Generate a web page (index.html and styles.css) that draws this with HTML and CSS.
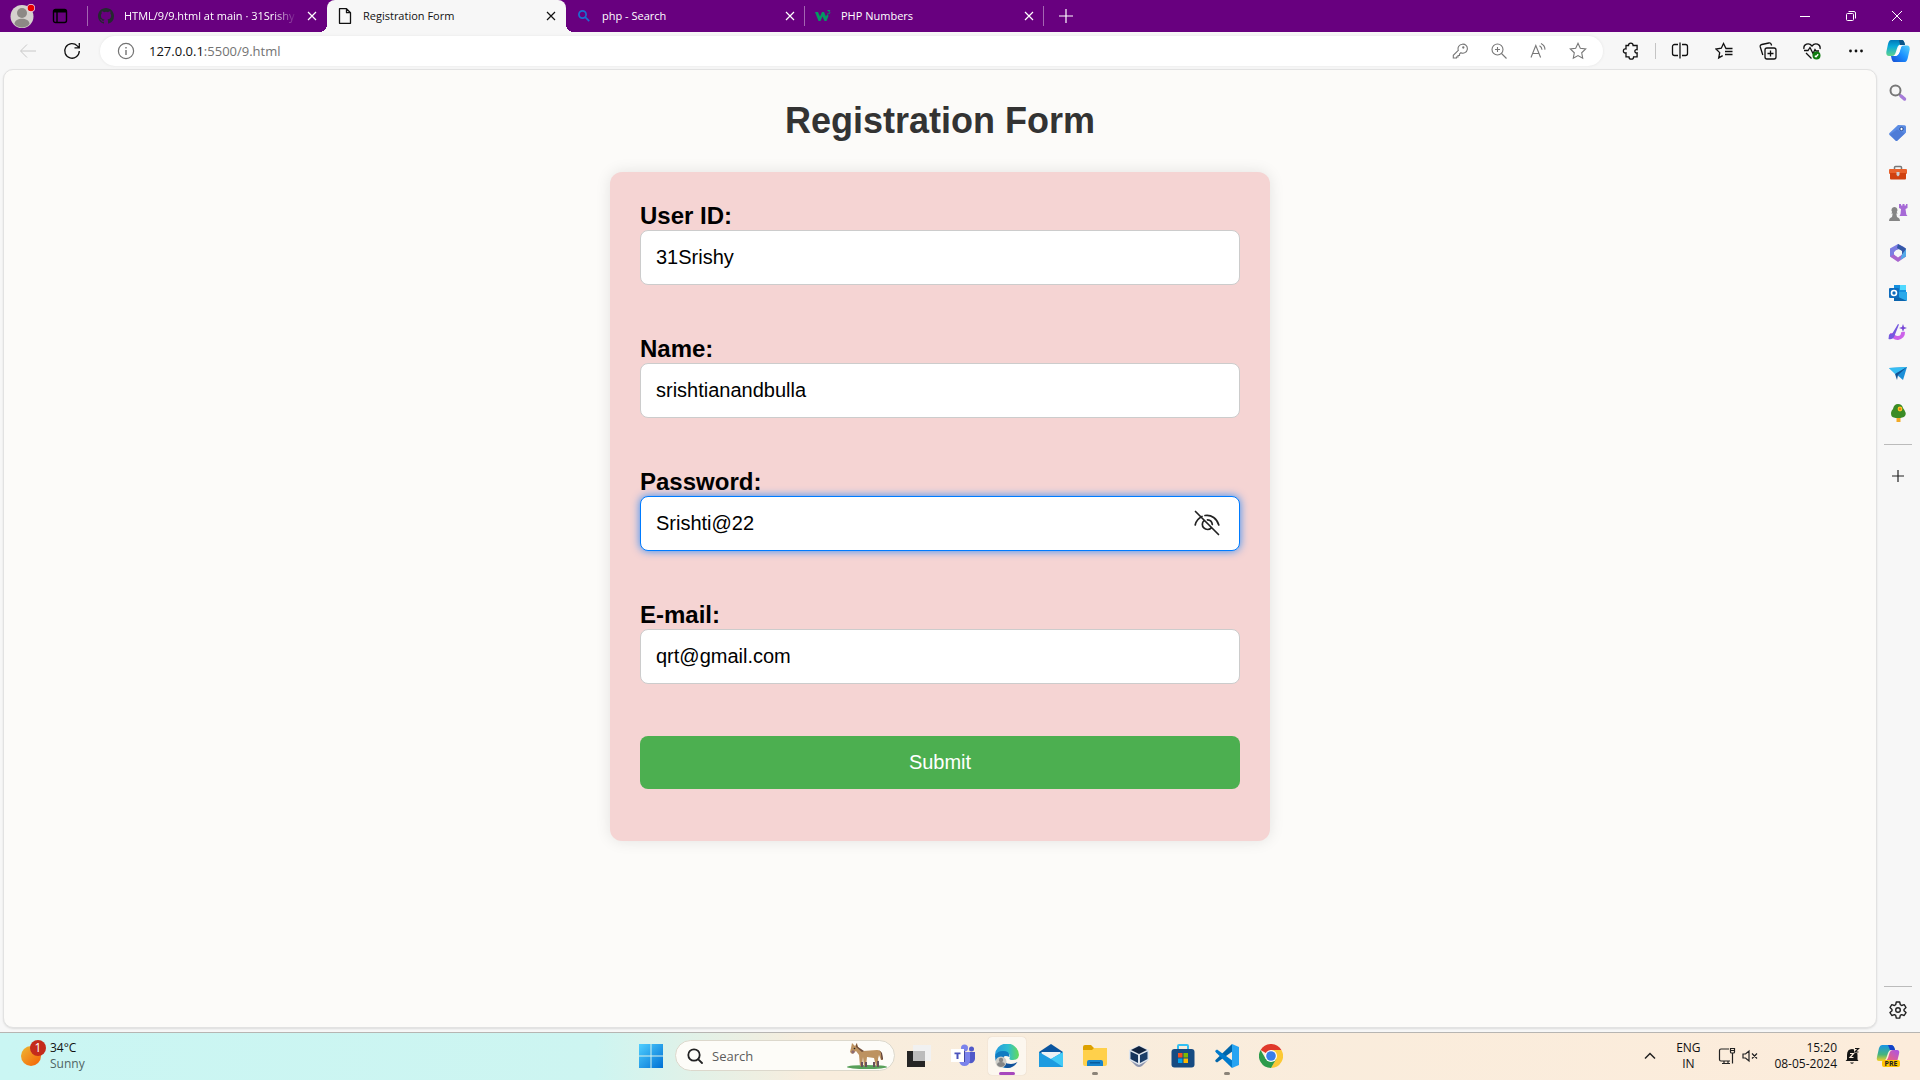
FILE: index.html
```html
<!DOCTYPE html>
<html lang="en">
<head>
<meta charset="utf-8">
<title>Registration Form</title>
<link rel="stylesheet" href="styles.css">
</head>
<body>
<header class="tabbar">
  <button class="profile" aria-label="Profile"><svg width="26" height="24" viewBox="0 0 26 24"><circle cx="12" cy="12.500" r="11.500" fill="#d5d1cd"/><circle cx="12" cy="9" r="5" fill="#8d8985"/><path d="M4.500 20c0-7 15-7 15 0-3 4.500-12 4.500-15 0z" fill="#8d8985"/><circle cx="21" cy="4" r="4" fill="#f2d8ea"/><circle cx="21" cy="4" r="3.300" fill="#e80000"/></svg></button>
  <button class="tab-actions" aria-label="Tab actions"><svg width="16" height="16" viewBox="0 0 16 16" fill="none" stroke="#000" stroke-width="1.400"><rect x="1.500" y="1.500" width="13" height="13" rx="2"/><path d="M2 3h12" stroke-width="3"/><path d="M5 4v10"/></svg></button>
  <nav class="tabs" aria-label="Tabs">
    <div class="tab divided-left">
      <svg width="16" height="16" viewBox="0 0 16 16"><path fill="#24292f" d="M8 0C3.580 0 0 3.580 0 8c0 3.540 2.290 6.530 5.470 7.590.4.070.55-.17.55-.38 0-.19-.01-.82-.01-1.490-2.010.37-2.530-.49-2.690-.94-.09-.23-.48-.94-.82-1.130-.28-.15-.68-.52-.01-.53.63-.01 1.080.58 1.230.82.72 1.210 1.870.87 2.330.66.070-.52.28-.87.51-1.070-1.780-.2-3.640-.89-3.640-3.950 0-.87.31-1.590.82-2.150-.08-.2-.36-1.020.08-2.120 0 0 .67-.21 2.200.82a7.600 7.600 0 0 1 4 0c1.530-1.040 2.200-.82 2.200-.82.44 1.100.16 1.920.08 2.120.51.56.82 1.270.82 2.150 0 3.070-1.870 3.750-3.650 3.950.29.25.54.73.54 1.480 0 1.070-.01 1.930-.01 2.200 0 .21.15.46.55.38A8 8 0 0 0 16 8c0-4.420-3.580-8-8-8z"/></svg>
      <span class="tab-title faded">HTML/9/9.html at main · 31Srishy</span>
      <button class="tab-close" aria-label="Close tab"><svg width="10" height="10" viewBox="0 0 10 10"><path d="M1 1l8 8M9 1L1 9"/></svg></button>
    </div>
    <div class="tab active">
      <svg width="16" height="16" viewBox="0 0 16 16" fill="none" stroke="#111" stroke-width="1.300" stroke-linejoin="round"><path d="M2.500 .7h7l4 4v10.600h-11zM9.500 .7v4h4"/></svg>
      <span class="tab-title">Registration Form</span>
      <button class="tab-close" aria-label="Close tab"><svg width="10" height="10" viewBox="0 0 10 10"><path d="M1 1l8 8M9 1L1 9"/></svg></button>
    </div>
    <div class="tab divided">
      <svg width="16" height="16" viewBox="0 0 16 16" fill="none" stroke="#1a6fd0" stroke-width="1.700"><circle cx="6.500" cy="6.500" r="3.600"/><path d="M9.200 9.200l4 4"/></svg>
      <span class="tab-title">php - Search</span>
      <button class="tab-close" aria-label="Close tab"><svg width="10" height="10" viewBox="0 0 10 10"><path d="M1 1l8 8M9 1L1 9"/></svg></button>
    </div>
    <div class="tab divided">
      <svg width="16" height="16" viewBox="0 0 16 16"><path d="M0 4h3l2 4.500L7 4h2l2 4.500L12.500 6l1 2-2 5h-2L7.500 8.500 5.500 13h-2z" fill="#059862"/><path d="M12.500 2.500h2.300l-1 1.400c1.800 0 1.500 2.400-1.300 1.700" fill="none" stroke="#059862"/></svg>
      <span class="tab-title">PHP Numbers</span>
      <button class="tab-close" aria-label="Close tab"><svg width="10" height="10" viewBox="0 0 10 10"><path d="M1 1l8 8M9 1L1 9"/></svg></button>
    </div>
  </nav>
  <button class="new-tab" aria-label="New tab"><svg width="14" height="14" viewBox="0 0 14 14" stroke="#fff" stroke-width="1.200"><path d="M7 0v14M0 7h14"/></svg></button>
  <div class="window-controls">
    <button aria-label="Minimize"><svg width="12" height="12" viewBox="0 0 12 12"><path d="M1 6.500h10"/></svg></button>
    <button aria-label="Restore"><svg width="12" height="12" viewBox="0 0 12 12"><rect x="1.500" y="3.500" width="7" height="7" rx="1"/><path d="M3.500 1.500H9A1.500 1.500 0 0 1 10.500 3v5.500"/></svg></button>
    <button aria-label="Close"><svg width="12" height="12" viewBox="0 0 12 12"><path d="M1 1l10 10M11 1L1 11"/></svg></button>
  </div>
</header>

<div class="toolbar">
  <button aria-label="Back"><svg width="18" height="18" viewBox="0 0 18 18" stroke="#c8c8c8"><path d="M17 9H2M8 2.500L1.500 9 8 15.500"/></svg></button>
  <button aria-label="Refresh"><svg width="18" height="18" viewBox="0 0 18 18" stroke="#111" stroke-width="1.300"><path d="M16.300 9a7.300 7.300 0 1 1-2-5.100L16 5.600M16.300 1v4.800h-4.800"/></svg></button>
  <div class="address">
    <svg width="18" height="18" viewBox="0 0 18 18" stroke="#737373" stroke-width="1.200"><circle cx="9" cy="9" r="7.600"/><path d="M9 8v5M9 5v1.400" stroke-width="1.400"/></svg>
    <a class="url" href="#"><span class="host">127.0.0.1</span>:5500/9.html</a>
    <div class="address-tools">
      <button aria-label="Passwords"><svg width="16" height="16" viewBox="0 0 16 16"><path d="M10.200 1.200a4.500 4.500 0 1 1-1.300 8.500L7.500 11v1.500H6V14H4.500v1H1.300v-2.700l5-5a4.600 4.600 0 0 1 3.900-6.100z"/><circle cx="11.300" cy="4.500" r=".6"/></svg></button>
      <button aria-label="Zoom"><svg width="16" height="16" viewBox="0 0 16 16"><circle cx="6.500" cy="6.500" r="5.500"/><path d="M10.500 10.500l5 5M6.500 4v5M4 6.500h5"/></svg></button>
      <button aria-label="Read aloud"><svg width="16" height="16" viewBox="0 0 16 16"><path d="M1 14.500L5.800 2.500l4.800 12M2.700 10.500h6.300M9.500 2.800a5 5 0 0 1 2.500 4M11 .6a7 7 0 0 1 4 6"/></svg></button>
      <button aria-label="Favorite this page"><svg width="18" height="18" viewBox="0 0 18 18"><path d="M9 1.300l2.300 5 5.400.7-4 3.800 1 5.400L9 13.600l-4.700 2.600 1-5.400-4-3.800 5.400-.7z"/></svg></button>
    </div>
  </div>
  <div class="extensions">
    <button aria-label="Extensions"><svg width="18" height="18" viewBox="0 0 18 18"><path d="M6.500 3.500a2.300 2.300 0 0 1 4.600 0h4v4.200c-3-1-3 4 0 3.200v4h-3.500a2.300 2.300 0 0 1-4.600 0H4v-4c-3.500 1-3.500-5 0-4V3.500z"/></svg></button>
    <span class="rule"></span>
    <button aria-label="Split screen"><svg width="18" height="18" viewBox="0 0 18 18"><path d="M7 2.500H3.500a2 2 0 0 0-2 2v7a2 2 0 0 0 2 2H7M11 2.500h3.500a2 2 0 0 1 2 2v7a2 2 0 0 1-2 2H11M9 .5v16"/></svg></button>
    <button aria-label="Favorites"><svg width="18" height="18" viewBox="0 0 18 18"><path d="M12 6.500h-1L8.500 1.500 6.300 6.200 1 7l3.700 3.600-1 5.300 4-2.300M10 9.500h7.500M10 12.500h7.500M12 6.500h5.500"/></svg></button>
    <button aria-label="Collections"><svg width="18" height="18" viewBox="0 0 18 18"><rect x="6" y="6" width="11" height="11" rx="2"/><path d="M11.500 8.500v6M8.500 11.500h6M3.800 13l-2.500-8q-.5-2 1.500-2.500l7-1.500q2-.3 2.500 1.500l.3 1"/></svg></button>
    <button aria-label="Browser essentials"><svg width="18" height="18" viewBox="0 0 18 18"><path d="M1 7C0 2 6 0 9 4c3-4 9-2 8 3M1 8.500h4l2-3 3 6 2-4 1 1.500h3M3 11l5.500 5.500"/><circle cx="13.500" cy="13.500" r="4" fill="#107c10" stroke="none"/><path d="M11.800 13.800l1.200 1 2.200-2.500" stroke="#fff"/></svg></button>
    <button aria-label="Settings and more"><svg width="18" height="18" viewBox="0 0 18 18"><g fill="#111" stroke="none"><circle cx="3.500" cy="9" r="1.400"/><circle cx="9" cy="9" r="1.400"/><circle cx="14.500" cy="9" r="1.400"/></g></svg></button>
  </div>
  <button class="copilot" aria-label="Copilot"><svg width="24" height="24" viewBox="0 0 24 24" stroke="none"><defs><linearGradient id="cpa" x1="0" y1="0" x2="0" y2="1"><stop offset="0" stop-color="#0078b8"/><stop offset=".4" stop-color="#09a9d9"/><stop offset="1" stop-color="#5fd48d"/></linearGradient><linearGradient id="cpb" x1="0" y1="1" x2="1" y2="0"><stop offset="0" stop-color="#174bd2"/><stop offset=".5" stop-color="#1a8fff"/><stop offset="1" stop-color="#58d3fb"/></linearGradient></defs><path d="M5 1h11q2 0 3 5l-4-.5q-3 0-4 4L9.500 14Q8.500 17 6 17H3Q0 17 .3 13L2 5Q3 1 5 1z" fill="url(#cpa)"/><path d="M13 1h3q2 0 3 5h-5z" fill="#0b5588"/><path d="M19 23H8q-2 0-3-6h4q3 0 4-4l1.500-4.500Q15.500 6.500 18 6.500h3q3 0 2.700 4L22 18q-1 5-3 5z" fill="url(#cpb)"/><path d="M15 7q-2 0-3 3l-1 4q-.5 2-2.500 2.500 3.500.5 4.500-3z" fill="#fff" stroke="#fff"/></svg></button>
</div>

<div class="workspace">
  <main class="page">
    <h1>Registration Form</h1>
    <form class="card">
      <div class="fields">
        <div class="field"><label for="userid">User ID:</label><input id="userid" type="text" value="31Srishy"></div>
        <div class="field"><label for="name">Name:</label><input id="name" type="text" value="srishtianandbulla"></div>
        <div class="field"><label for="password">Password:</label>
          <div class="reveal-wrap"><input id="password" class="focused" type="text" value="Srishti@22"><button class="reveal" type="button" aria-label="Hide password"><svg width="26" height="26" viewBox="0 0 26 26" fill="none" stroke="#222" stroke-width="1.700" stroke-linecap="round"><path d="M1.500 1.500l23 23M8 6.500C4.500 8.200 2 11 1.200 15M11 5.500c6.500-1 12 3 13.800 9.500M10 10.500a5.200 5.200 0 1 0 7.300 7.400M13.500 9.800a5.200 5.200 0 0 1 4.800 4.700"/></svg></button></div>
        </div>
        <div class="field"><label for="email">E-mail:</label><input id="email" type="email" value="qrt@gmail.com"></div>
      </div>
      <button class="submit" type="button">Submit</button>
    </form>
  </main>
  <aside class="sidebar">
    <div class="side-group">
      <button aria-label="Search"><svg width="20" height="20" viewBox="0 0 20 20"><circle cx="7.500" cy="7.500" r="5" fill="#f6f6f6" stroke="#777" stroke-width="2"/><path d="M11 11l3 3" stroke="#777" stroke-width="2"/><path d="M13 13l3.500 3" stroke="#a67bd9" stroke-width="3.500" stroke-linecap="round"/></svg></button>
      <button aria-label="Shopping"><svg width="20" height="20" viewBox="0 0 20 20"><path d="M10 2l6.500 .3q1.500 0 1.500 1.500L18 9.500l-8.500 8q-1 1-2 0L1.500 12q-1-1 0-2z" fill="#5b8ce4"/><path d="M2 11.500l7-5 8 4-7.500 7q-1 1-2 0z" fill="#4672cf" opacity=".6"/><circle cx="13.500" cy="6" r="1.700" fill="#fff" stroke="#214896"/></svg></button>
      <button aria-label="Tools"><svg width="20" height="20" viewBox="0 0 20 20"><path d="M6.500 7V4.500q0-1 1-1h5q1 0 1 1V7" fill="none" stroke="#777" stroke-width="1.500"/><rect x="1" y="6" width="18" height="5" rx="1" fill="#e8622c"/><path d="M2 10h16v5.500q0 1-1 1H3q-1 0-1-1z" fill="#d04210"/><path d="M8.500 9h3v3L10 13.500 8.500 12z" fill="#ccd2d5"/></svg></button>
      <button aria-label="Games"><svg width="20" height="20" viewBox="0 0 20 20"><path d="M11 1h2v1.500h1.500V1h2v1.500H18V1h1.500v4l-2 1 .8 5.500 1.200 1.500h-8l1-2L13 6l-2-1z" fill="#a669d6"/><path d="M6.500 4a3 3 0 0 1 2.200 5l1 1.500H8.300l.7 3.500q3 1 3 4H1q0-3 3-4l.7-3.500H3.200l1-1.500A3 3 0 0 1 6.500 4z" fill="#858585"/></svg></button>
      <button aria-label="Microsoft 365"><svg width="20" height="20" viewBox="0 0 20 20"><path d="M10 1L2 5.500v8l4 2V9l4-2.500 7-2z" fill="#7c7de2"/><path d="M10 1l8 4.500v8.200l-4-2.500V8l-5-3z" fill="#3457a6"/><path d="M2 13.500l8 5.500 8-5.500v-5l-4 3-4 3-4-3z" fill="#a865ce"/><path d="M18 6v7.500L12 17l2-5.500z" fill="#53a9e8"/><circle cx="10" cy="10" r="3.200" fill="#f7f7f7"/></svg></button>
      <button aria-label="Outlook"><svg width="20" height="20" viewBox="0 0 20 20"><path d="M6 2h12v14H6z" fill="#1490df"/><path d="M12 2h6v5h-6z" fill="#50d9ff"/><path d="M6 9l13 0v8q0 1-1 1H6z" fill="#28a8ea"/><path d="M6 12l13 6H6z" fill="#0a64ad"/><rect x="1" y="5" width="10" height="10" rx="1" fill="#0f6cbd"/><circle cx="6" cy="10" r="2.500" fill="none" stroke="#fff" stroke-width="1.600"/></svg></button>
      <button aria-label="Designer"><svg width="20" height="20" viewBox="0 0 20 20"><path d="M4 10a5.500 5.500 0 1 0 11-1" fill="none" stroke="#cc62e9" stroke-width="4"/><path d="M10 1l1 .5L6 14q-2 3-5.500 2l.5-4q1-2 3-1z" fill="#7559df"/><path d="M15 1l1 3 3 1-3 1-1 3-1-3-3-1 3-1z" fill="#7747d6"/></svg></button>
      <button aria-label="Drop"><svg width="20" height="20" viewBox="0 0 20 20"><path d="M1 5l18-1-4 13-7-6z" fill="#1d8fd8"/><path d="M1 5l18-1L7 11z" fill="#36bdf3"/><path d="M7 11l12-7-9 8-1 5z" fill="#125395"/></svg></button>
      <button aria-label="E-tree"><svg width="20" height="20" viewBox="0 0 20 20"><path d="M8.500 13h4v6h-4z" fill="#f2aa28"/><path d="M10 1q4 0 5 4 4 5 2 8-2 2-7 2T3.500 13Q2 9 5 6q1-5 5-5z" fill="#3a8c26"/><circle cx="12" cy="6" r="2.400" fill="#ffc321"/><circle cx="12" cy="6" r="1" fill="#e36717"/></svg></button>
    </div>
    <hr>
    <button class="side-add" aria-label="Customize"><svg width="14" height="14" viewBox="0 0 14 14" stroke="#222" stroke-width="1.200"><path d="M7 1v12M1 7h12"/></svg></button>
    <hr class="push">
    <button class="side-settings" aria-label="Settings"><svg width="18" height="18" viewBox="0 0 18 18" fill="none" stroke="#222" stroke-width="1.400" stroke-linejoin="round"><path d="M7.300 1h3.400l.6 2.700 1.300.8 2.600-.9L17 6.500l-2 1.900v1.300l2 1.900-1.800 2.900-2.600-.9-1.300.8-.6 2.700H7.300l-.6-2.700-1.300-.8-2.600.9L1 11.600l2-1.900V8.400L1 6.500l1.800-2.900 2.600.9 1.300-.8z"/><circle cx="9" cy="9" r="2.300"/></svg></button>
  </aside>
</div>

<footer class="taskbar">
  <button class="weather">
    <svg width="28" height="32" viewBox="0 0 28 32"><defs><linearGradient id="sun" x1="0" y1="0" x2="1" y2="1"><stop offset="0" stop-color="#edb934"/><stop offset="1" stop-color="#f65f04"/></linearGradient></defs><circle cx="11" cy="16" r="10" fill="url(#sun)"/><circle cx="18" cy="8" r="8" fill="#c42b1c"/><text x="18" y="12" class="badge-text">1</text></svg>
    <span class="weather-text"><span>34°C</span><span class="muted">Sunny</span></span>
  </button>
  <div class="apps">
    <button class="app" aria-label="Start"><svg width="24" height="24" viewBox="0 0 24 24"><defs><linearGradient id="win" x1="0" y1="0" x2="1" y2="1" gradientUnits="objectBoundingBox"><stop offset="0" stop-color="#4fcfff"/><stop offset="1" stop-color="#0070d4"/></linearGradient></defs><path d="M0 0h11.500v11.500H0zM12.500 0H24v11.500H12.500zM0 12.500h11.500V24H0zM12.500 12.500H24V24H12.500z" fill="url(#win)"/></svg></button>
    <div class="search"><label for="tasksearch" aria-label="Search"><svg width="16" height="16" viewBox="0 0 16 16" fill="none" stroke="#222" stroke-width="1.800" stroke-linecap="round"><circle cx="7" cy="7" r="5.700"/><path d="M11.300 11.300l3.700 3.700"/></svg></label><input id="tasksearch" type="text" placeholder="Search"><svg width="40" height="28" viewBox="0 0 40 28"><ellipse cx="20" cy="25" rx="20" ry="2" fill="#58a05a"/><path d="M5 1l3 3 2-3 1 4 5 4 14-1q4 0 5 4l1 6h-2l-2-5-1 4 1 7h-3l-2-8-7-1-1 9h-2l-1-9-1 9h-2l-1-11-3-4-4 3-2-2 1-4z" fill="#bd9260"/><path d="M9 1l2 4 6 4-2 1-6-5z" fill="#74513c"/><path d="M14 20h2v5h-2zM18 20h2v5h-2zM26 20h2v5h-2zM30 19h2v6h-2z" fill="#67505b"/><path d="M32 8l2 3 .5 7 1.500-1-1-6z" fill="#5d4038"/><path d="M4 10l2-2 2 2-2 2z" fill="#8b6a72"/><circle cx="7.500" cy="6.500" r=".8" fill="#222"/></svg></div>
    <button class="app" aria-label="Task view"><svg width="24" height="24" viewBox="0 0 24 24"><path d="M0 7h18v16H0z" fill="#252525"/><path d="M6 1h18v16H6z" fill="#f1f1f1"/><path d="M6 7h12v10H6z" fill="#bcbcbc"/></svg></button>
    <button class="app" aria-label="Teams"><svg width="24" height="24" viewBox="0 0 24 24"><circle cx="13.500" cy="4" r="3.500" fill="#7b83eb"/><circle cx="20.500" cy="5" r="2.500" fill="#5059c9"/><path d="M15 8h9v7q-1 5-6 4z" fill="#5059c9"/><path d="M8 8h11v9q-1 5-5.500 5T8 17z" fill="#7b83eb"/><path d="M2 7h12v11H2z" fill="#4348a0"/><path d="M0 5h13v13H0z" fill="#fff"/><path d="M3.500 8.500h6v1.800H7.500V15h-2v-4.700h-2z" fill="#4b53bc"/></svg></button>
    <button class="app current" aria-label="Edge"><svg width="24" height="24" viewBox="0 0 24 24"><defs><linearGradient id="edg"><stop offset="0" stop-color="#279bdf"/><stop offset=".55" stop-color="#2fbed0"/><stop offset="1" stop-color="#66db57"/></linearGradient></defs><path d="M0 12A12 12 0 0 1 24 11q-.5 5-6 5-4 0-3.500-2c2-3-1-5-5-5Q3 9 0 12z" fill="url(#edg)"/><path d="M0 12Q2 7 8 7q7 0 6.500 6Q7 10 8 17q2 6 9 5.500Q12 25 7 23 0 20 0 12z" fill="#117bc1"/><path d="M9 12q-2 8 7 8 3 0 6.500-2-4 6-10 6-7-1-7-7z" fill="#12539b"/><circle cx="6" cy="18" r="5.500" fill="#cdcdc8"/><circle cx="6" cy="16" r="2.200" fill="#858585"/><path d="M2 21q0-3 4-3t4 3q-4 4-8 0z" fill="#858585"/></svg></button>
    <button class="app" aria-label="Mail"><svg width="24" height="24" viewBox="0 0 24 24"><path d="M0 8l12-8 12 8v5H0z" fill="#0b559f"/><path d="M2.500 8h19v9h-19z" fill="#edf2f5"/><path d="M0 8l12 7 12-7v15H0z" fill="#1d9be0"/><path d="M24 8v15L12 15z" fill="#42caf6"/></svg></button>
    <button class="app running" aria-label="File Explorer"><svg width="24" height="24" viewBox="0 0 24 24"><path d="M0 3q0-2 2-2h6l3 3h12q1 0 1 1v6H0z" fill="#dda100"/><path d="M0 6h9l2-2h13v16q0 2-2 2H2q-2 0-2-2z" fill="#ffd04b"/><path d="M4 22v-4q0-2 2-2h12q2 0 2 2v4z" fill="#1583cd"/><path d="M7 18h10v1.500H7z" fill="#075b9d"/></svg></button>
    <button class="app" aria-label="VirtualBox"><svg width="24" height="24" viewBox="0 0 24 24"><path d="M3 10v6l6 6q3 2 6 0l6-6v-6z" fill="#8d95ae"/><path d="M12 1l10 5v10l-10 5-10-5V6z" fill="#dfe6ee"/><path d="M12 2l8 4-8 4-8-4z" fill="#10233f"/><path d="M3.500 7.500L11 11v8l-7.500-4z" fill="#16355d"/><path d="M20.500 7.500L13 11v8l7.500-4z" fill="#1c3f69"/></svg></button>
    <button class="app" aria-label="Microsoft Store"><svg width="24" height="24" viewBox="0 0 24 24"><path d="M7 6V2q0-1 1-1h8q1 0 1 1v4" fill="none" stroke="#33c0f3" stroke-width="2"/><rect x=".5" y="5" width="23" height="18.500" rx="3" fill="#164b82"/><path d="M7 9h4.500v4.500H7z" fill="#f25022"/><path d="M12.500 9H17v4.500h-4.500z" fill="#7fba00"/><path d="M7 14.500h4.500V19H7z" fill="#00a4ef"/><path d="M12.500 14.500H17V19h-4.500z" fill="#ffb900"/></svg></button>
    <button class="app running" aria-label="Visual Studio Code"><svg width="24" height="24" viewBox="0 0 24 24"><path d="M17 0L1 15.500 0 17l2 1.500L18 7z" fill="#0065a9"/><path d="M17 24L1 8.500 0 7l2-1.500L18 17z" fill="#007acc"/><path d="M17 0l7 3v18l-7 3z" fill="#27a4f2"/></svg></button>
    <button class="app" aria-label="Chrome"><svg width="24" height="24" viewBox="0 0 24 24"><path d="M12 12L1.600 6A12 12 0 0 1 22.400 6z" fill="#e0392b"/><path d="M12 12V6h10.400A12 12 0 0 1 12 24l5-9z" fill="#fcc934"/><path d="M1.600 6A12 12 0 0 0 12 24l5.200-9H12L6.800 15z" fill="#2d9b4b"/><circle cx="12" cy="12" r="6" fill="#fff"/><circle cx="12" cy="12" r="4.800" fill="#397eea"/></svg></button>
  </div>
  <div class="tray">
    <button aria-label="Show hidden icons"><svg width="12" height="12" viewBox="0 0 12 12" fill="none" stroke="#222" stroke-width="1.500"><path d="M1 8.500l5-5 5 5"/></svg></button>
    <button class="lang"><span>ENG</span><span>IN</span></button>
    <button class="status" aria-label="Network and volume">
      <svg width="18" height="18" viewBox="0 0 18 18" fill="none" stroke="#222" stroke-width="1.200"><path d="M11 2H3Q1.500 2 1.500 3.500v9Q1.500 14 3 14h9M4 16.500h8M6 14v2.500M10 14v2.500M12.500 1.500h4V5q0 1-1 1h-2q-1 0-1-1zM14.500 6v10.500M12.500 3.500h4"/></svg>
      <svg width="16" height="16" viewBox="0 0 16 16" fill="none" stroke="#222" stroke-width="1.200"><path d="M1 6v4h2.500L7 13V3L3.500 6zM10 5.500l5 5M15 5.500l-5 5"/></svg>
    </button>
    <button class="clock"><span>15:20</span><span>08-05-2024</span></button>
    <button aria-label="Notifications"><svg width="16" height="18" viewBox="0 0 16 18"><path d="M3 12.500V8q0-6 5-6 5.500 0 5.500 6v4.500l1 1.500H1.500zM6 15.500h4q-2 2.500-4 0z" fill="#151515"/><path d="M10 0h6v6h-6z" fill="#fcecdb"/><path d="M6 6.500h3.500L6 10.500h3.500" fill="none" stroke="#fcecdb" stroke-width="1.200"/><path d="M11 1.500h3.500l-3.500 3.500h3.500" fill="none" stroke="#151515" stroke-width="1.200"/></svg></button>
    <button aria-label="Copilot preview"><svg width="26" height="24" viewBox="0 0 26 24"><defs><linearGradient id="pra" x1="0" y1="0" x2="0" y2="1"><stop offset="0" stop-color="#1795e7"/><stop offset=".6" stop-color="#45b57c"/><stop offset="1" stop-color="#f5d128"/></linearGradient><linearGradient id="prb" x1="1" y1="0" x2="0" y2="1"><stop offset="0" stop-color="#a654ed"/><stop offset="1" stop-color="#ff655c"/></linearGradient></defs><path d="M6 1h9q3 0 4 5h-4q-2 0-3 3l-2 6q-1 2-4 2H3q-3 0-2-4l2-9Q4 1 6 1z" fill="url(#pra)"/><path d="M12 1h3q3 0 4 5h-5z" fill="#1542c8"/><path d="M17 6h4q3 0 2 4l-2 8H8q3-1 4-4l1.500-5Q14.500 6 17 6z" fill="url(#prb)"/><rect x="6" y="16" width="18" height="7" rx="2" fill="#ffc400"/><text x="15" y="22" class="pre-text">PRE</text></svg></button>
  </div>
</footer>
</body>
</html>
```
FILE: styles.css
```css
* { box-sizing: border-box; }
body {
  margin: 0;
  min-height: 100vh;
  display: flex;
  flex-direction: column;
  background: #f7f7f7;
  font-family: "Open Sans", "Noto Sans", sans-serif;
  font-size: 12px;
  color: #111;
}
button {
  border: 0;
  padding: 0;
  background: none;
  font: inherit;
  color: inherit;
  display: flex;
  align-items: center;
  justify-content: center;
}
svg { display: block; flex: none; }

/* Tab strip */
.tabbar { display: flex; align-items: center; height: 32px; background: #68007f; color: #fff; }
.profile { width: 26px; margin-left: 10px; }
.tab-actions { width: 16px; margin-left: 16px; }
.tabs { display: flex; align-self: stretch; margin-left: 20px; }
.tab { display: flex; align-items: center; gap: 10px; width: 239px; padding: 0 10px; position: relative; font-size: 11px; }
.tab-title { flex: 1; min-width: 0; white-space: nowrap; line-height: 16px; }
.faded { -webkit-mask-image: linear-gradient(90deg, #000 86%, transparent); mask-image: linear-gradient(90deg, #000 86%, transparent); }
.tab-close svg { fill: none; stroke: currentColor; stroke-width: 1.2; }
.divided::after, .divided-left::before {
  content: "";
  position: absolute;
  right: 0;
  top: 6px;
  width: 1px;
  height: 20px;
  background: #a466b2;
}
.divided-left::before { right: auto; left: -1px; }
.active { background: #f7f7f7; color: #111; border-radius: 8px 8px 0 0; }
.active::before, .active::after {
  content: "";
  position: absolute;
  bottom: 0;
  width: 8px;
  height: 8px;
}
.active::before { left: -8px; background: radial-gradient(circle at 0 0, transparent 8px, #f7f7f7 8px); }
.active::after { right: -8px; background: radial-gradient(circle at 100% 0, transparent 8px, #f7f7f7 8px); }
.new-tab { width: 44px; }
.window-controls { display: flex; margin-left: auto; }
.window-controls button { width: 46px; height: 32px; }
.window-controls svg { fill: none; stroke: #fff; }

/* Toolbar */
.toolbar { display: flex; align-items: center; height: 37px; padding: 0 10px 0 19px; }
.toolbar svg { fill: none; }
.toolbar > button:nth-of-type(2) { margin: 0 19px 0 26px; }
.address {
  flex: 1;
  display: flex;
  align-items: center;
  height: 30px;
  padding: 0 16px 0 17px;
  border-radius: 15px;
  background: #fff;
  box-shadow: 0 0 3px #e4e4e4;
}
.url { margin-left: 14px; font-size: 13px; line-height: 20px; color: #737373; text-decoration: none; }
.host { color: #111; }
.address-tools { display: flex; gap: 23px; margin-left: auto; }
.address-tools svg { stroke: #777; stroke-width: 1.1; }
.extensions { display: flex; align-items: center; gap: 26px; margin: 0 21px 0 19px; }
.extensions svg { stroke: #111; stroke-width: 1.3; }
.rule { width: 1px; height: 16px; margin: 0 -11px; background: #c4c4c4; }

/* Page area */
.workspace { flex: 1; display: flex; }
.page {
  flex: 1;
  margin: 0 0 4px 3px;
  padding: 30px 20px;
  border: 1px solid #e2e2e2;
  border-radius: 10px;
  background: #fcfbf9;
  box-shadow: 0 1px 2px #dcdcdc;
  font-family: "Liberation Sans", Arial, sans-serif;
}
h1 { margin: 0 0 31px; font-size: 36px; line-height: 41px; text-align: center; color: #333; }
.card {
  max-width: 660px;
  margin: 0 auto;
  padding: 30px 30px 52px;
  border-radius: 12px;
  background: #f5d4d3;
  box-shadow: 0 0 15px rgba(0, 0, 0, .1);
}
.fields { display: grid; gap: 50px; margin-bottom: 52px; }
.field label { display: block; font-size: 24px; line-height: 28px; font-weight: 700; color: #000; }
.field input {
  display: block;
  width: 100%;
  height: 55px;
  padding: 15px;
  border: 1px solid #ccc;
  border-radius: 8px;
  background: #fff;
  font: 20px "Liberation Sans", Arial, sans-serif;
  color: #000;
}
.field .focused { border-color: #007bff; box-shadow: 0 0 8px rgba(0, 123, 255, .8); }
.reveal-wrap { position: relative; }
.reveal { position: absolute; right: 20px; top: 14px; }
.submit {
  width: 100%;
  height: 53px;
  border-radius: 8px;
  background: #4caf50;
  color: #fff;
  font-size: 20px;
}

/* Edge sidebar */
.sidebar { width: 43px; display: flex; flex-direction: column; align-items: center; padding: 14px 2px 13px 0; }
.side-group { display: grid; gap: 20px; }
.sidebar hr { width: 28px; margin: 21px 0 24px; border: 0; border-top: 1px solid #bbb; }
.sidebar .push { margin: auto 0 14px; }

/* Taskbar */
.taskbar {
  display: grid;
  grid-template-columns: 1fr auto 1fr;
  align-items: center;
  height: 48px;
  padding-bottom: 2px;
  border-top: 1px solid #b7b5b2;
  background: linear-gradient(90deg, #caf6f3 0, #cdf5f1 31%, #f8eddd 42%, #fcecdb 100%);
}
.weather { justify-self: start; gap: 2px; margin-left: 20px; text-align: left; }
.weather-text, .lang, .clock { display: flex; flex-direction: column; line-height: 16px; }
.muted { color: #4f6464; }
.badge-text { font-size: 12px; fill: #fff; text-anchor: middle; }
.apps { display: flex; align-items: center; padding-left: 2px; }
.app { width: 44px; height: 38px; position: relative; }
.current::before { content: ""; position: absolute; inset: 0 3px; border-radius: 4px; background: #fff8; box-shadow: 0 0 1px #c9b9a8; }
.app svg { position: relative; }
.current::after, .running::after {
  content: "";
  position: absolute;
  bottom: 0;
  left: 14px;
  width: 16px;
  height: 3px;
  border-radius: 2px;
  background: #a748bd;
}
.running::after { left: 19px; width: 6px; background: #8b8378; }
.search {
  display: flex;
  align-items: center;
  width: 220px;
  height: 31px;
  margin: 0 2px;
  padding: 0 7px 0 11px;
  border: 1px solid #dcd8cc;
  border-radius: 16px;
  background: #fdfcf8;
}
.search input {
  flex: 1;
  min-width: 0;
  margin-left: 9px;
  padding: 0;
  border: 0;
  background: none;
  font: 13px "Open Sans", "Noto Sans", sans-serif;
}
.search input::placeholder { color: #5c5c5c; opacity: 1; }
.tray { display: flex; align-items: center; justify-content: flex-end; padding-right: 18px; }
.lang { width: 32px; margin: 0 14px 0 16px; }
.status { gap: 6px; margin-right: 16px; }
.clock { align-items: flex-end; margin-right: 7px; }
.tray > button:last-child { margin-left: 16px; }
.pre-text { font-size: 7px; font-weight: 700; text-anchor: middle; fill: #222; }
```
